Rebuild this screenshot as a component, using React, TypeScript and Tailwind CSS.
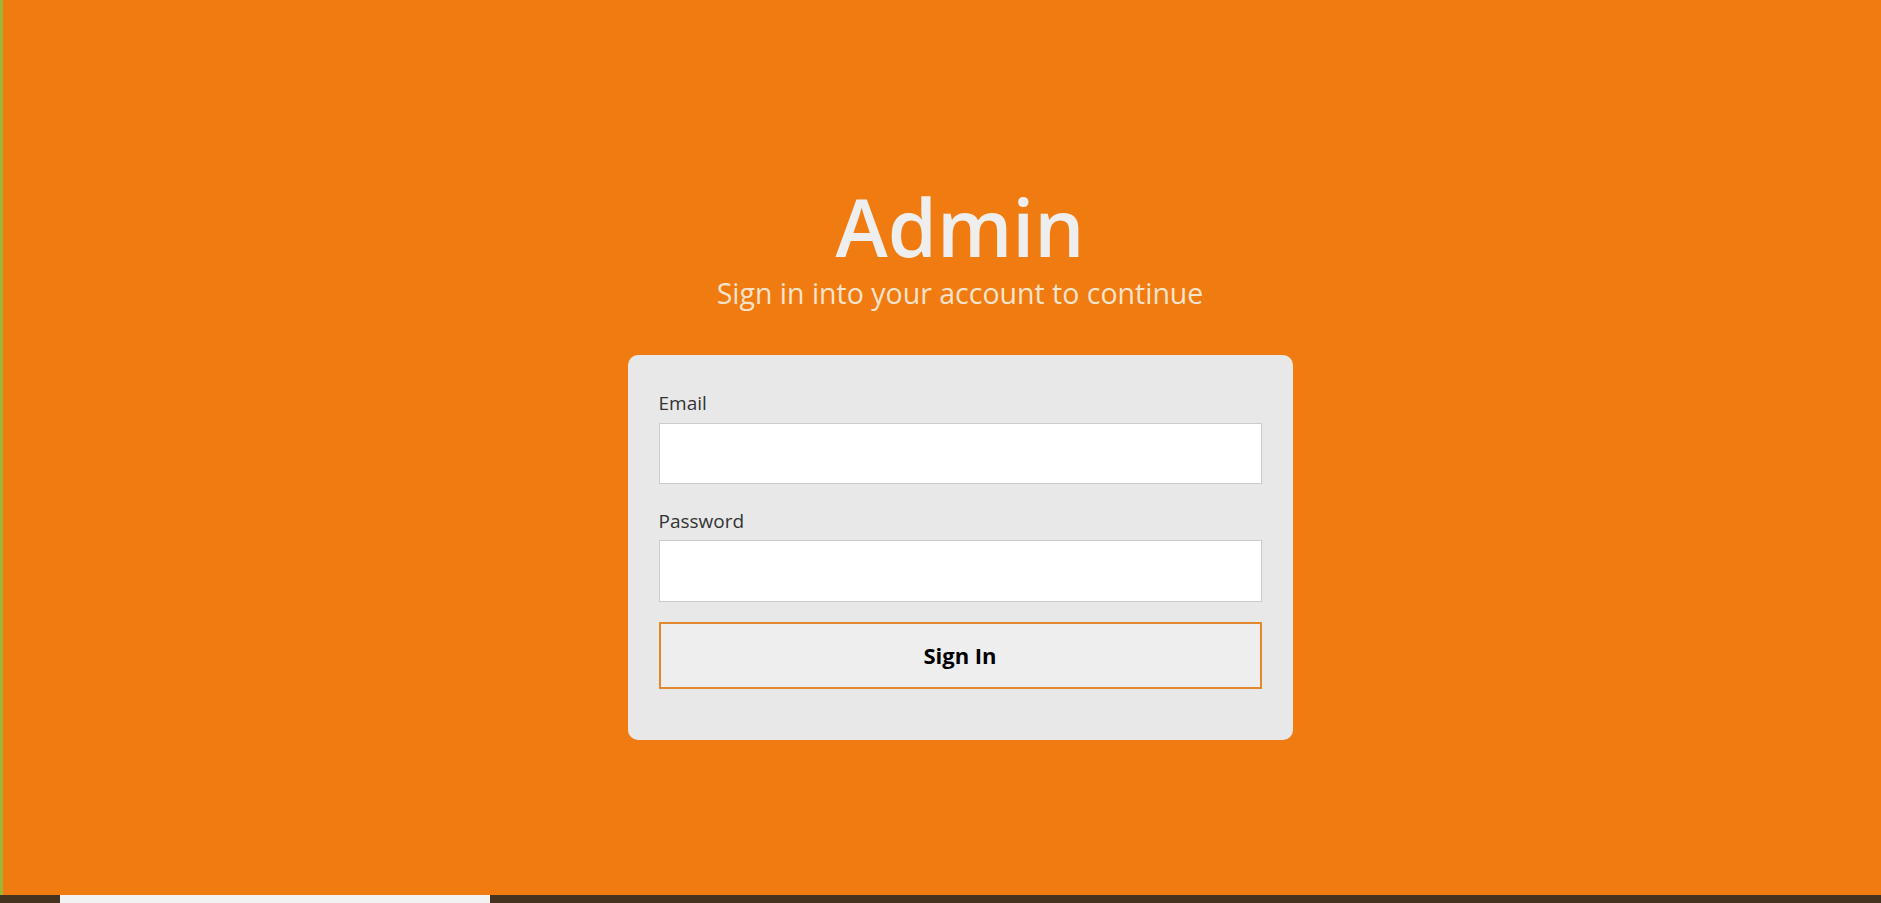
import React from "react";

export default function App() {
  return (
    <div
      className="w-full h-[903px] flex flex-col bg-[#f07c11] overflow-hidden"
      style={{ fontFamily: '"Open Sans", "Noto Sans", sans-serif' }}
    >
      <div className="flex-1 flex border-l-[3px] border-[#9fb534]">
        <div className="flex-1 flex flex-col items-center pt-[187px] pl-[36px]">
          <h1 className="text-[79px] leading-none font-semibold text-[#eeeeee]">Admin</h1>
          <p className="mt-[10px] text-[28.5px] leading-[34px] text-[#f8e3cc]">
            Sign in into your account to continue
          </p>
          <div className="mt-[45px] w-[665px] bg-[#e8e8e8] rounded-[10px] px-[31px] pt-[35px] pb-[51px] flex flex-col">
            <label className="text-[19px] leading-[26px] text-[#333333]">Email</label>
            <input
              type="email"
              className="mt-[7px] h-[61px] w-full bg-white border border-[#cccccc] outline-none px-3"
            />
            <label className="mt-[24px] text-[19px] leading-[26px] text-[#333333]">Password</label>
            <input
              type="password"
              className="mt-[6px] h-[62px] w-full bg-white border border-[#cccccc] outline-none px-3"
            />
            <button className="mt-[20px] h-[67px] w-full bg-[#eeeeee] border-2 border-[#e0892f] text-[22px] font-bold text-black">
              Sign In
            </button>
          </div>
        </div>
      </div>
      <div className="h-[8px] flex bg-[#45321f]">
        <div className="w-[60px]" />
        <div className="w-[430px] bg-[#f2f2f2]" />
      </div>
    </div>
  );
}
